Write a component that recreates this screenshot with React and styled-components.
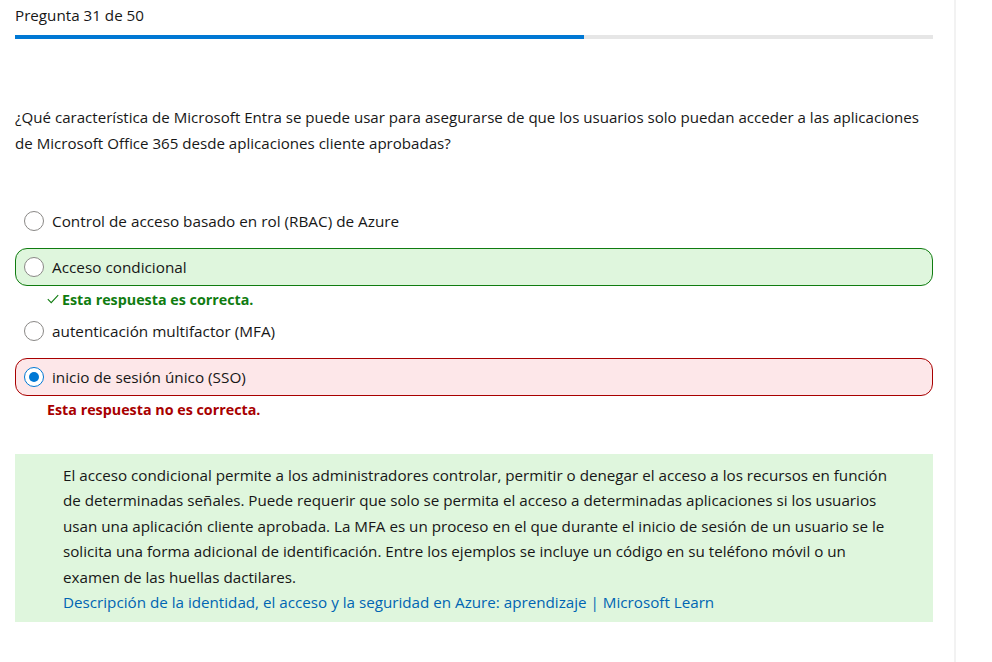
import React from "react";
import styled, { createGlobalStyle } from "styled-components";

const GlobalStyle = createGlobalStyle`
  html, body { margin: 0; padding: 0; background: #ffffff; }
  body {
    font-family: "Open Sans", "Noto Sans", "Liberation Sans", sans-serif;
    color: #171717;
    -webkit-font-smoothing: antialiased;
  }
`;

const Page = styled.div`
  display: flex;
  min-height: 662px;
`;

const Main = styled.main`
  width: 918px;
  padding: 0 21px 0 15px;
  border-right: 2px solid #f2f2f2;
`;

const Sidebar = styled.aside`
  flex: 1;
  background: #ffffff;
`;

const Header = styled.div`
  padding-top: 5px;
  font-size: 15.2px;
  line-height: 20px;
  color: #171717;
`;

const Progress = styled.div`
  margin-top: 10px;
  height: 4px;
  background: #e6e6e6;
  display: flex;
`;

const ProgressFill = styled.div`
  height: 100%;
  background: #0078d4;
`;

const Question = styled.p`
  margin: 65px 0 0;
  font-size: 15.1px;
  line-height: 26px;
`;

const Options = styled.div`
  margin-top: 46px;
  display: flex;
  flex-direction: column;
`;

const OptionBox = styled.label`
  display: flex;
  align-items: center;
  gap: 8px;
  height: 36px;
  padding: 0 8px;
  margin-bottom: 8px;
  border-radius: 12px;
  border: 1px solid ${(p) =>
    p.$state === "correct" ? "#107c10" : p.$state === "wrong" ? "#a80000" : "transparent"};
  background: ${(p) =>
    p.$state === "correct" ? "#dff6dd" : p.$state === "wrong" ? "#fde7e9" : "transparent"};
  font-size: 15.3px;
  color: #171717;
`;

const Radio = styled.span`
  box-sizing: border-box;
  width: 20px;
  height: 20px;
  border-radius: 50%;
  border: 1px solid ${(p) => (p.$checked ? "#0078d4" : "#8a8886")};
  background: #ffffff;
  display: flex;
  align-items: center;
  justify-content: center;
  flex-shrink: 0;
  &::after {
    content: "";
    display: ${(p) => (p.$checked ? "block" : "none")};
    width: 10px;
    height: 10px;
    border-radius: 50%;
    background: #0078d4;
  }
`;

const Feedback = styled.div`
  display: flex;
  align-items: center;
  gap: 3px;
  margin: -4px 0 4px 32px;
  height: 18px;
  font-size: 14.3px;
  font-weight: 700;
  color: ${(p) => (p.$ok ? "#107c10" : "#a80000")};
`;

const Explanation = styled.div`
  margin-top: 32px;
  background: #dff6dd;
  padding: 9px 36px 7px 48px;
  font-size: 15.2px;
  line-height: 25.4px;
  color: #171717;
`;

const Link = styled.a`
  color: #0065b3;
  text-decoration: none;
`;

const CheckIcon = () => (
  <svg width="12" height="10" viewBox="0 0 12 10" aria-hidden="true">
    <path d="M0.8 5.2 L4.2 8.6 L11.2 1.2" fill="none" stroke="#107c10" strokeWidth="1.1" />
  </svg>
);

const options = [
  { text: "Control de acceso basado en rol (RBAC) de Azure" },
  { text: "Acceso condicional", state: "correct" },
  { text: "autenticación multifactor (MFA)" },
  { text: "inicio de sesión único (SSO)", state: "wrong", checked: true },
];

export default function App() {
  return (
    <>
      <GlobalStyle />
      <Page>
        <Main>
          <Header>Pregunta 31 de 50</Header>
          <Progress>
            <ProgressFill style={{ width: `${(31 / 50) * 100}%` }} />
          </Progress>
          <Question>
            ¿Qué característica de Microsoft Entra se puede usar para asegurarse de que los usuarios solo
            puedan acceder a las aplicaciones de Microsoft Office 365 desde aplicaciones cliente aprobadas?
          </Question>
          <Options>
            {options.map((o) => (
              <React.Fragment key={o.text}>
                <OptionBox $state={o.state}>
                  <Radio $checked={o.checked} />
                  {o.text}
                </OptionBox>
                {o.state === "correct" && (
                  <Feedback $ok>
                    <CheckIcon />
                    Esta respuesta es correcta.
                  </Feedback>
                )}
                {o.state === "wrong" && <Feedback>Esta respuesta no es correcta.</Feedback>}
              </React.Fragment>
            ))}
          </Options>
          <Explanation>
            El acceso condicional permite a los administradores controlar, permitir o denegar el acceso a los
            recursos en función de determinadas señales. Puede requerir que solo se permita el acceso a
            determinadas aplicaciones si los usuarios usan una aplicación cliente aprobada. La MFA es un
            proceso en el que durante el inicio de sesión de un usuario se le solicita una forma adicional de
            identificación. Entre los ejemplos se incluye un código en su teléfono móvil o un examen de las
            huellas dactilares.
            <br />
            <Link href="#">
              Descripción de la identidad, el acceso y la seguridad en Azure: aprendizaje | Microsoft Learn
            </Link>
          </Explanation>
        </Main>
        <Sidebar />
      </Page>
    </>
  );
}
